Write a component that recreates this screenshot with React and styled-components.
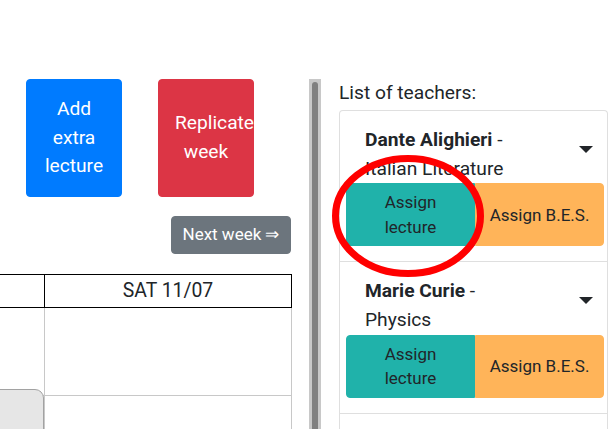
import React from 'react';
import styled, { createGlobalStyle } from 'styled-components';

const Global = createGlobalStyle`
  html, body { margin: 0; padding: 0; background: #fff; }
  body {
    font-family: Roboto, "Liberation Sans", Arial, sans-serif;
    font-size: 19.2px;
    line-height: 1.5;
    color: #212529;
  }
  * { box-sizing: border-box; }
`;

const Page = styled.div`
  position: relative;
  height: 429px;
  overflow: hidden;
  padding-top: 79px;
  display: flex;
`;

const LeftPane = styled.div`
  width: 309px;
  flex: none;
  overflow: hidden;
  padding-right: 19px;
  display: flex;
  flex-direction: column;
  & > * { flex: none; }
`;

const ActionRow = styled.div`
  display: flex;
  gap: 36px;
  padding-left: 26px;
  height: 118px;
`;

const BigButton = styled.button`
  width: 96px;
  padding: 0 16px;
  border: 1px solid ${p => p.$bg};
  background: ${p => p.$bg};
  color: #fff;
  border-radius: 4px;
  font-family: inherit;
  font-size: 19.2px;
  line-height: 1.5;
  text-align: center;
`;

const NextRow = styled.div`
  display: flex;
  justify-content: flex-end;
  margin-top: 19px;
  margin-right: -1px;
`;

const NextButton = styled.button`
  width: 120px;
  height: 38px;
  padding: 0 10px;
  border: 1px solid #6c757d;
  background: #6c757d;
  color: #fff;
  border-radius: 4px;
  font-family: inherit;
  font-size: 17px;
  line-height: 1.5;
  white-space: nowrap;
`;

const Table = styled.table`
  margin-top: 20px;
  margin-left: -101px;
  width: 392px;
  border-collapse: collapse;
  table-layout: fixed;
`;

const HeadCell = styled.th`
  border: 1px solid #000;
  font-weight: 400;
  font-size: 19.4px;
  line-height: 28px;
  padding: 2px 8px;
  text-align: center;
  color: #212529;
`;

const BodyCell = styled.td`
  position: relative;
  border: 1px solid #c8c8c8;
  height: 88px;
  padding: 0;
`;

const EventBox = styled.div`
  position: absolute;
  top: -7px;
  left: 0;
  right: 0;
  height: 80px;
  background: #e6e6e6;
  border: 1px solid #a2a2a2;
  border-radius: 9px 9px 0 0;
`;

const Divider = styled.div`
  width: 12px;
  flex: none;
  background: #c8c8c8;
  display: flex;
  justify-content: center;
  padding-top: 3px;
`;

const Handle = styled.div`
  width: 6px;
  background: #808080;
  border-radius: 3px 3px 0 0;
`;

const RightPane = styled.div`
  flex: 1;
  padding-left: 18px;
  padding-right: 1px;
  display: flex;
  flex-direction: column;
  & > * { flex: none; }
`;

const Label = styled.div`
  line-height: 28.8px;
  margin-bottom: 2px;
`;

const List = styled.div`
  border: 1px solid #dfdfdf;
  border-radius: 4px 4px 0 0;
  border-bottom: none;
`;

const Item = styled.div`
  border-bottom: 1px solid #dfdfdf;
  padding: 15px 3px 15px 6px;
  min-height: 40px;
`;

const ItemHead = styled.div`
  display: flex;
  padding-left: 19px;
`;

const Name = styled.div`
  width: 172px;
  line-height: 28.8px;
  b { font-weight: 700; }
`;

const Caret = styled.span`
  margin-left: auto;
  margin-right: 11px;
  margin-top: 20px;
  width: 0;
  height: 0;
  border-left: 7.5px solid transparent;
  border-right: 7.5px solid transparent;
  border-top: 7.5px solid #212529;
`;

const BtnGroup = styled.div`
  display: flex;
`;

const AssignButton = styled.button`
  flex: 1 1 0;
  min-width: 0;
  padding: 6px 12px;
  border: 1px solid ${p => p.$bg};
  background: ${p => p.$bg};
  color: #212529;
  border-radius: ${p => (p.$first ? '4px 0 0 4px' : '0 4px 4px 0')};
  font-family: inherit;
  font-size: 17px;
  line-height: 24.5px;
  text-align: center;
`;

const Overlay = styled.svg`
  position: absolute;
  left: 0;
  top: 0;
  pointer-events: none;
`;

const teachers = [
  { name: 'Dante Alighieri', subject: 'Italian Literature' },
  { name: 'Marie Curie', subject: 'Physics' },
];

export default function App() {
  return (
    <Page>
      <Global />
      <LeftPane>
        <ActionRow>
          <BigButton $bg="#007bff">Add extra lecture</BigButton>
          <BigButton $bg="#dc3545">Replicate week</BigButton>
        </ActionRow>
        <NextRow>
          <NextButton>Next week ⇒</NextButton>
        </NextRow>
        <Table>
          <colgroup>
            <col style={{ width: 145 }} />
            <col style={{ width: 247 }} />
          </colgroup>
          <thead>
            <tr>
              <HeadCell />
              <HeadCell>SAT 11/07</HeadCell>
            </tr>
          </thead>
          <tbody>
            <tr>
              <BodyCell />
              <BodyCell />
            </tr>
            <tr>
              <BodyCell>
                <EventBox />
              </BodyCell>
              <BodyCell />
            </tr>
          </tbody>
        </Table>
      </LeftPane>
      <Divider>
        <Handle />
      </Divider>
      <RightPane>
        <Label>List of teachers:</Label>
        <List>
          {teachers.map(t => (
            <Item key={t.name}>
              <ItemHead>
                <Name>
                  <b>{t.name}</b> - {t.subject}
                </Name>
                <Caret />
              </ItemHead>
              <BtnGroup>
                <AssignButton $first $bg="#20b2aa">Assign lecture</AssignButton>
                <AssignButton $bg="#ffb459">Assign B.E.S.</AssignButton>
              </BtnGroup>
            </Item>
          ))}
          <Item />
        </List>
      </RightPane>
      <Overlay width="609" height="429" viewBox="0 0 609 429">
        <ellipse cx="408" cy="216" rx="72.5" ry="57.5" fill="none" stroke="#ff0000" strokeWidth="7" />
      </Overlay>
    </Page>
  );
}
